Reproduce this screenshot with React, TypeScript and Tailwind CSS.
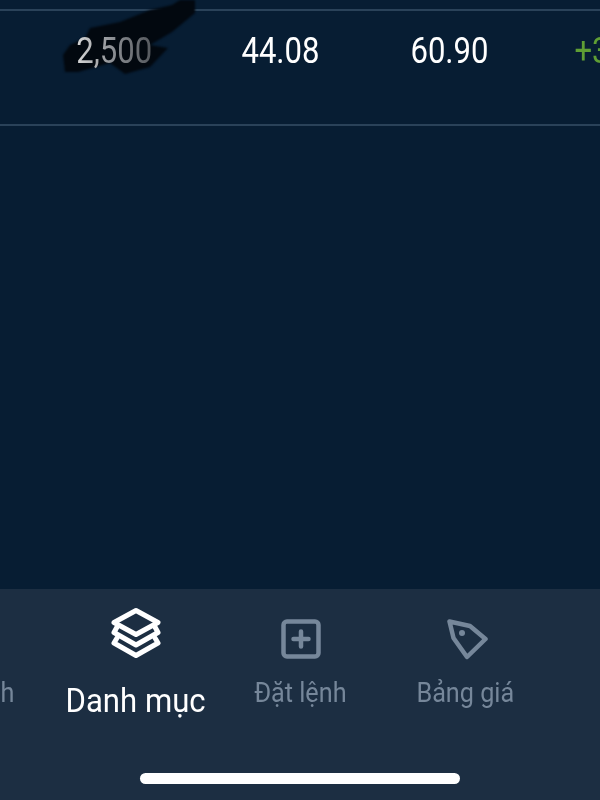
import React from "react";

function LayersIcon() {
  return (
    <svg width="52" height="52" viewBox="0 0 52 52" fill="none" stroke="#ffffff" strokeWidth="5" strokeLinejoin="round" strokeLinecap="round">
      <path d="M26 3.5 L48 15.5 L26 27.5 L4 15.5 Z" />
      <path d="M7 20 L4 25.5 L26 38 L48 25.5 L45 20" />
      <path d="M7 31 L4 36 L26 48.5 L48 36 L45 31" />
    </svg>
  );
}

function PlusSquareIcon() {
  return (
    <svg width="40" height="40" viewBox="0 0 40 40" fill="none" stroke="#76879a" strokeLinecap="round">
      <rect x="2.5" y="2.5" width="35" height="35" rx="3.5" strokeWidth="4.5" />
      <path d="M20 12.5 V27.5 M12.5 20 H27.5" strokeWidth="4.5" />
    </svg>
  );
}

function TagIcon() {
  return (
    <svg className="ml-[3px]" width="42" height="42" viewBox="0 0 42 42" fill="none" stroke="#76879a" strokeWidth="4.5" strokeLinejoin="round">
      <path d="M3.5 3.5 L24 8 L39.5 21 L21 39 L7.5 20 Z" />
      <circle cx="16" cy="15" r="3" fill="#76879a" stroke="none" />
    </svg>
  );
}

function Scribble() {
  return (
    <svg className="absolute left-[50px] top-0 blur-[1px]" width="160" height="80" viewBox="0 0 160 80">
      <path
        d="M130 0 L122 5 L100 10 L70 22 L40 28 L35 38 L20 45 L13 55 L15 72 L28 72 L60 63 L75 74 L100 67 L118 48 L100 45 L122 32 L145 13 L145 0 Z"
        fill="#02080f"
      />
    </svg>
  );
}

function Cell({ children, className }: { children: React.ReactNode; className: string }) {
  return (
    <div className={`flex shrink-0 justify-center ${className}`}>
      <span className="inline-block scale-x-[0.84] text-[37px] leading-[36px]">{children}</span>
    </div>
  );
}

function NavItem({ icon, label }: { icon: React.ReactNode; label: string }) {
  return (
    <div className="flex w-[165px] shrink-0 flex-col items-center pt-[29px]">
      <div className="flex h-[42px] items-center justify-center">{icon}</div>
      <span className="mt-[18px] scale-x-[0.9] whitespace-nowrap text-[28px] leading-[30px] text-[#76879a]">
        {label}
      </span>
    </div>
  );
}

export default function App() {
  return (
    <div className="relative flex h-[800px] w-[600px] flex-col overflow-hidden bg-[#071d33] font-['Roboto',sans-serif]">
      <div className="h-[11px] shrink-0 border-b-2 border-[#2a4259]" />

      {/* Position row */}
      <div className="flex h-[115px] shrink-0 overflow-hidden border-b-2 border-[#2a4259] pl-[32px] pt-[22px] text-white">
        <div className="relative z-10 flex w-[165px] shrink-0 justify-center">
          <span className="inline-block scale-x-[0.84] bg-gradient-to-r from-[#d8d8d8] via-[#8a8d92] to-[#55595e] bg-clip-text text-[37px] leading-[36px] text-transparent">
            2,500
          </span>
        </div>
        <Cell className="w-[167px]">44.08</Cell>
        <Cell className="w-[170px]">60.90</Cell>
        <Cell className="w-[160px] text-[#5f9e34]">+3.40</Cell>
      </div>

      <div className="flex-1" />

      {/* Bottom tabs */}
      <div className="flex h-[211px] shrink-0 flex-col bg-[#1c2e42]">
        <div className="ml-[-125px] flex flex-1">
          <div className="flex w-[178px] shrink-0 flex-col items-center pt-[29px]">
            <div className="h-[42px]" />
            <span className="mt-[18px] scale-x-[0.9] whitespace-nowrap text-[28px] leading-[30px] text-[#76879a]">
              Tài chính
            </span>
          </div>
          <div className="flex w-[165px] shrink-0 flex-col items-center pt-[18px]">
            <LayersIcon />
            <span className="mt-[21px] scale-x-[0.915] whitespace-nowrap text-[34px] leading-[40px] text-white">
              Danh mục
            </span>
          </div>
          <NavItem icon={<PlusSquareIcon />} label="Đặt lệnh" />
          <NavItem icon={<TagIcon />} label="Bảng giá" />
        </div>
        <div className="flex justify-center pb-[16px]">
          <div className="h-[11px] w-[320px] rounded-full bg-white" />
        </div>
      </div>

      <Scribble />
    </div>
  );
}
